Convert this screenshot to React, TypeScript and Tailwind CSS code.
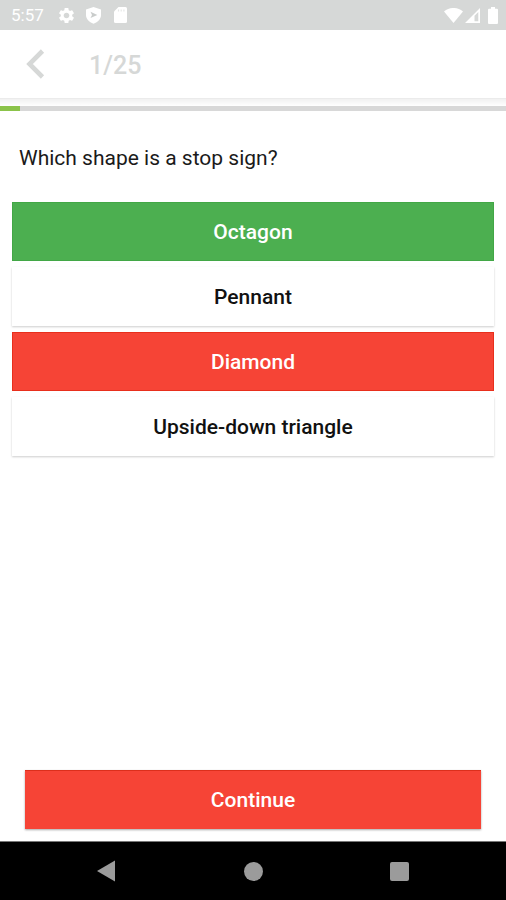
import { MdSettings } from "react-icons/md";
import { clsx } from "clsx";

type AnswerState = "correct" | "wrong" | "idle";

const answers: { label: string; state: AnswerState }[] = [
  { label: "Octagon", state: "correct" },
  { label: "Pennant", state: "idle" },
  { label: "Diamond", state: "wrong" },
  { label: "Upside-down triangle", state: "idle" },
];

function StatusBar() {
  return (
    <div className="flex h-[30px] items-center justify-between bg-[#d6d8d7] pr-2 pl-[11px] text-white">
      <div className="flex items-center">
        <span className="w-[46px] text-[17px] leading-5">5:57</span>
        <MdSettings className="size-[19px]" aria-hidden="true" />
        <svg className="ml-[10px] h-[17px] w-[15px]" viewBox="0 0 14 17" preserveAspectRatio="none" aria-hidden="true">
          <path d="M7 0 14 2.600V8c0 4-2.800 7.200-7 8.800C2.800 15.200 0 12 0 8V2.600Z" fill="#fff" />
          <path d="m4.200 4.800 6.400 3.100-6.400 3.100 1.400-3.100Z" fill="#c9cccb" />
        </svg>
        <svg className="ml-[13px] h-4 w-[13px]" viewBox="0 0 13 16" aria-hidden="true">
          <path d="M4.500 0H11.500Q13 0 13 1.500V14.500Q13 16 11.500 16H1.500Q0 16 0 14.500V4.500Z" fill="#fff" />
          <path d="M4.500 2.500V4.500M7.200 2.500V4.500M9.900 2.500V4.500" stroke="#e6e8e7" strokeWidth="1.200" />
        </svg>
      </div>
      <div className="flex items-center">
        <svg className="h-[15px] w-[19px]" viewBox="0 0 19 15" aria-hidden="true">
          <path d="M0 3.500C5.500-1.200 13.500-1.200 19 3.500L9.500 15Z" fill="#fff" />
        </svg>
        <svg className="ml-[2px] h-[15px] w-[15px]" viewBox="0 0 15 15" aria-hidden="true">
          <path d="M15 0V15H0ZM13.300 4 9.500 7.800V13.300H13.300Z" fill="#fff" fillRule="evenodd" />
        </svg>
        <svg className="ml-2 h-[17px] w-[10px]" viewBox="0 0 10 17" aria-hidden="true">
          <path d="M3 0H7V1.800H9Q10 1.800 10 3V16Q10 17 9 17H1Q0 17 0 16V3Q0 1.800 1 1.800H3Z" fill="#fff" />
        </svg>
      </div>
    </div>
  );
}

function Answer({ label, state }: { label: string; state: AnswerState }) {
  return (
    <button
      type="button"
      className={clsx(
        "h-[59px] w-full text-center text-[21px] leading-6 font-medium",
        state === "correct" && "border border-[#42a746] bg-[#4caf50] text-white",
        state === "wrong" && "border border-[#e82f1c] bg-[#f64436] text-white",
        state === "idle" && "bg-white text-[#111] shadow-[0_1px_2px_rgba(0,0,0,0.2)]",
      )}
    >
      {label}
    </button>
  );
}

export default function App() {
  return (
    <div className="flex min-h-screen flex-col bg-white font-['Roboto',sans-serif]">
      <StatusBar />
      <header className="flex h-[69px] items-center border-b border-[#ebebeb] pl-[26px] text-[#d6d8d7]">
        <button type="button" aria-label="Back" className="h-[30px] w-[63px]">
          <svg className="h-[30px] w-5" viewBox="0 0 20 30" aria-hidden="true">
            <path d="M16.500 2 3.500 15l13 13" fill="none" stroke="currentColor" strokeWidth="4.600" />
          </svg>
        </button>
        <h1 className="pt-1 text-[25px] leading-8 font-medium">1/25</h1>
      </header>
      <div className="h-[7px] bg-gradient-to-b from-[#f1f1f1] to-white" />
      <div
        role="progressbar"
        aria-label="Quiz progress"
        aria-valuemin={0}
        aria-valuemax={25}
        aria-valuenow={1}
        className="h-[5px] bg-[#d8d8d8]"
      >
        <div className="h-full w-[4%] bg-[#8bc34a]" />
      </div>
      <main className="flex grow flex-col">
        <h2 className="px-[19px] pt-[35px] text-[21px] leading-6 text-[#1a1a1a]">Which shape is a stop sign?</h2>
        <div className="mt-8 flex flex-col gap-[6px] px-3">
          {answers.map((answer) => (
            <Answer key={answer.label} label={answer.label} state={answer.state} />
          ))}
        </div>
        <div className="mt-auto px-[25px] pb-3">
          <button
            type="button"
            className="h-[59px] w-full border-t border-[#dc2f1c] bg-[#f64436] text-[21px] leading-6 font-medium text-white shadow-[0_1px_2px_rgba(0,0,0,0.35)]"
          >
            Continue
          </button>
        </div>
      </main>
      <nav className="grid h-[59px] grid-cols-[1fr_auto_1fr] items-center border-t border-[#777] bg-black text-[#9b9b9b]">
        <button type="button" aria-label="Back" className="mr-[128px] justify-self-end">
          <svg className="h-[22px] w-[19px]" viewBox="0 0 19 22" aria-hidden="true">
            <path d="M0 11 18 .5v21Z" fill="currentColor" />
          </svg>
        </button>
        <button type="button" aria-label="Home" className="size-[19px] rounded-full bg-current" />
        <button type="button" aria-label="Recent apps" className="ml-[127px] size-[19px] rounded-[2px] bg-current" />
      </nav>
    </div>
  );
}
